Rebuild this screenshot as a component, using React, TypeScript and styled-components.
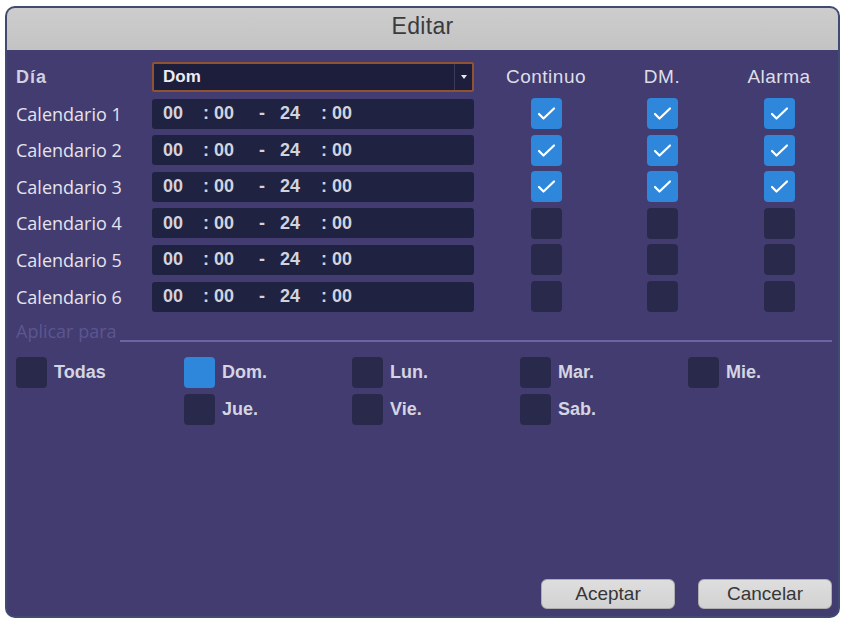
import React from "react";
import styled, { createGlobalStyle } from "styled-components";

const GlobalStyle = createGlobalStyle`
  html, body {
    margin: 0;
    padding: 0;
    background: #ffffff;
  }
  body {
    font-family: "Liberation Sans", Arial, sans-serif;
  }
`;

const Page = styled.div`
  padding: 6px 0 0 5px;
`;

const Window = styled.div`
  width: 835px;
  height: 612px;
  box-sizing: border-box;
  border: 2px solid #414a70;
  border-radius: 10px;
  overflow: hidden;
  display: flex;
  flex-direction: column;
  background: #433c70;
`;

const TitleBar = styled.div`
  height: 42px;
  flex: none;
  display: flex;
  align-items: center;
  justify-content: center;
  padding-bottom: 5px;
  box-sizing: border-box;
  background: linear-gradient(#cdcdcd, #c3c3c3);
  color: #3b3b3b;
  font-size: 23px;
  letter-spacing: 0.3px;
`;

const Body = styled.div`
  flex: 1;
  display: flex;
  flex-direction: column;
  padding: 12px 0 7px 9px;
  min-height: 0;
`;

const ScheduleGrid = styled.div`
  display: grid;
  grid-template-columns: 136px 336px 116px 116px 118px;
  grid-auto-rows: 30px;
  row-gap: 6.6px;
  align-items: center;
`;

const Label = styled.div<{ $sans?: boolean }>`
  font-family: ${(p) => (p.$sans ? `"Liberation Sans", Arial, sans-serif` : `"Open Sans", sans-serif`)};
  font-size: 18px;
  font-weight: ${(p) => (p.$sans ? "bold" : "normal")};
  letter-spacing: ${(p) => (p.$sans ? "1px" : "0")};
  color: ${(p) => (p.$sans ? "#d0d0e0" : "#e4e4ee")};
  white-space: nowrap;
`;

const ColHead = styled.div`
  justify-self: center;
  font-size: 19px;
  letter-spacing: 0.5px;
  color: #dedee8;
`;

const Select = styled.div`
  width: 322px;
  height: 30px;
  box-sizing: border-box;
  border: 2px solid #8f5233;
  border-radius: 2px;
  background: #1d1e3b;
  display: flex;
  align-items: center;
  color: #ececf4;
  font-size: 17px;
  font-weight: bold;
`;

const SelectValue = styled.span`
  flex: 1;
  padding-left: 9px;
`;

const SelectArrow = styled.span`
  width: 17px;
  align-self: stretch;
  border-left: 1px solid #3b3a5c;
  display: flex;
  align-items: center;
  justify-content: center;
  &::after {
    content: "";
    border-left: 3.5px solid transparent;
    border-right: 3.5px solid transparent;
    border-top: 4px solid #e8e8f0;
  }
`;

const TimeField = styled.div`
  width: 322px;
  height: 30px;
  box-sizing: border-box;
  border-radius: 3px;
  background: #202241;
  display: flex;
  align-items: center;
  padding-left: 11px;
  color: #d2d3de;
  font-size: 18px;
  font-weight: bold;
`;

const Seg = styled.span<{ $w: number }>`
  width: ${(p) => p.$w}px;
  flex: none;
  white-space: pre;
`;

const Box = styled.div<{ $on?: boolean }>`
  width: 31px;
  height: 31px;
  border-radius: 4px;
  background: ${(p) => (p.$on ? "#2f87dc" : "#29294c")};
  display: flex;
  align-items: center;
  justify-content: center;
  flex: none;
`;

const CheckCell = styled(Box)`
  justify-self: center;
`;

const SectionHead = styled.div`
  display: flex;
  align-items: flex-end;
  height: 30px;
  margin-top: 0.4px;
  margin-right: 6px;
`;

const SectionTitle = styled.span`
  font-family: "Open Sans", sans-serif;
  font-size: 18px;
  line-height: 22px;
  color: #5b5690;
  white-space: nowrap;
`;

const Rule = styled.div`
  flex: 1;
  margin-left: 3px;
  border-top: 2px solid #6a64a2;
`;

const DayGrid = styled.div`
  display: grid;
  grid-template-columns: repeat(4, 168px) auto;
  grid-auto-rows: 31px;
  row-gap: 6px;
  margin-top: 15px;
`;

const Day = styled.div`
  display: flex;
  align-items: center;
  gap: 7px;
  color: #d4d4e2;
  font-size: 18px;
  font-weight: bold;
`;

const Spacer = styled.div`
  flex: 1;
`;

const Actions = styled.div`
  display: flex;
  justify-content: flex-end;
  gap: 23px;
  margin-right: 6px;
`;

const Button = styled.button`
  width: 134px;
  height: 30px;
  border: 1px solid #aeaeae;
  border-radius: 6px;
  background: linear-gradient(#dedede, #d2d2d2);
  color: #363636;
  font-family: "Liberation Sans", Arial, sans-serif;
  font-size: 19px;
  padding: 0;
`;

const Check = () => (
  <svg width="31" height="31" viewBox="0 0 31 31">
    <polyline
      points="8,16 12.5,20.5 23,10.5"
      fill="none"
      stroke="#ffffff"
      strokeWidth="2.2"
      strokeLinecap="round"
      strokeLinejoin="round"
    />
  </svg>
);

const rows = [1, 2, 3, 4, 5, 6].map((n) => ({ name: `Calendario ${n}`, on: n <= 3 }));

const days: (null | { name: string; on?: boolean })[] = [
  { name: "Todas" },
  { name: "Dom.", on: true },
  { name: "Lun." },
  { name: "Mar." },
  { name: "Mie." },
  null,
  { name: "Jue." },
  { name: "Vie." },
  { name: "Sab." },
];

const App = () => {
  return (
    <Page>
      <GlobalStyle />
      <Window>
        <TitleBar>Editar</TitleBar>
        <Body>
          <ScheduleGrid>
            <Label $sans>Día</Label>
            <Select>
              <SelectValue>Dom</SelectValue>
              <SelectArrow />
            </Select>
            <ColHead>Continuo</ColHead>
            <ColHead>DM.</ColHead>
            <ColHead>Alarma</ColHead>
            {rows.map((r) => (
              <React.Fragment key={r.name}>
                <Label>{r.name}</Label>
                <TimeField>
                  <Seg $w={40}>00</Seg>
                  <Seg $w={56}>: 00</Seg>
                  <Seg $w={21}>-</Seg>
                  <Seg $w={41}>24</Seg>
                  <Seg $w={40}>: 00</Seg>
                </TimeField>
                {[0, 1, 2].map((i) => (
                  <CheckCell key={i} $on={r.on}>
                    {r.on && <Check />}
                  </CheckCell>
                ))}
              </React.Fragment>
            ))}
          </ScheduleGrid>

          <SectionHead>
            <SectionTitle>Aplicar para</SectionTitle>
            <Rule />
          </SectionHead>

          <DayGrid>
            {days.map((d, i) =>
              d ? (
                <Day key={d.name}>
                  <Box $on={d.on} />
                  {d.name}
                </Day>
              ) : (
                <div key={i} />
              )
            )}
          </DayGrid>

          <Spacer />
          <Actions>
            <Button>Aceptar</Button>
            <Button>Cancelar</Button>
          </Actions>
        </Body>
      </Window>
    </Page>
  );
};

export default App;
